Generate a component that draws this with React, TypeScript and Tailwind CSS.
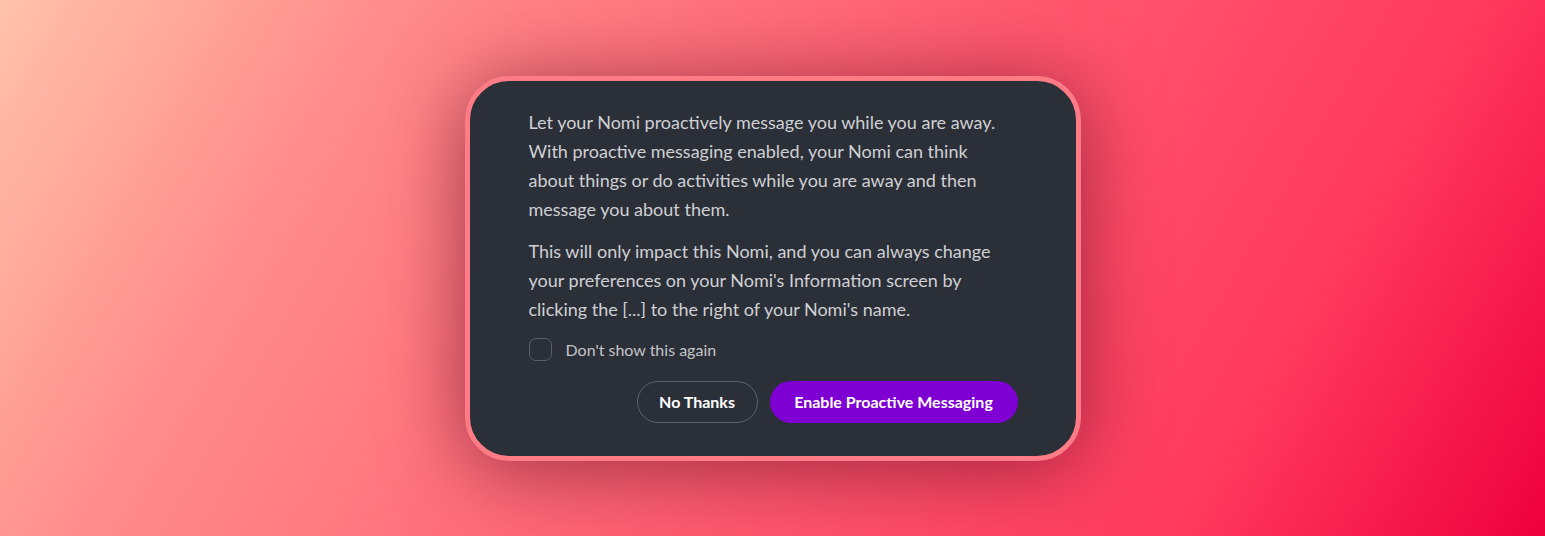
import { useState } from "react";

export default function App() {
  const [dontShow, setDontShow] = useState(false);

  return (
    <div className="flex h-[536px] w-full items-center justify-center bg-[linear-gradient(120deg,#ffc2aa_0%,#ff8e8c_20%,#ff5a70_55%,#ff3a5e_80%,#ee003e_100%)] font-['Lato',sans-serif]">
      {/* Dialog */}
      <div className="w-[616px] rounded-[44px] border-[5px] border-[#ff7b86] bg-[#2b2f38] pb-[33px] pl-[59px] pr-[58px] pt-[27px] shadow-[0_8px_80px_rgba(90,10,30,0.6)]">
        <div className="flex flex-col gap-[13px] text-[18px] leading-[29px] text-[#cfd0d4]">
          <p>
            Let your Nomi proactively message you while you are away. With
            proactive messaging enabled, your Nomi can think about things or do
            activities while you are away and then message you about them.
          </p>
          <p>
            This will only impact this Nomi, and you can always change your
            preferences on your Nomi's Information screen by clicking the [...]
            to the right of your Nomi's name.
          </p>
        </div>

        {/* Checkbox */}
        <label className="mt-[14px] flex cursor-pointer items-center gap-[14px]">
          <button
            onClick={() => setDontShow(!dontShow)}
            className="flex h-[23px] w-[23px] items-center justify-center rounded-[7px] border border-[#5b5f68]"
          >
            {dontShow && (
              <svg className="h-3.5 w-3.5 text-white" viewBox="0 0 24 24" fill="none" stroke="currentColor" strokeWidth={3}>
                <path strokeLinecap="round" strokeLinejoin="round" d="M5 13l4 4L19 7" />
              </svg>
            )}
          </button>
          <span className="text-[16px] text-[#c3c4c8]">Don't show this again</span>
        </label>

        {/* Buttons */}
        <div className="mt-[19px] flex justify-end gap-[12px]">
          <button className="h-[42px] w-[121px] rounded-full border border-[#5d6169] text-[16px] font-bold text-white">
            No Thanks
          </button>
          <button className="h-[42px] w-[248px] rounded-full bg-[#7e00d3] text-[16px] font-bold text-white">
            Enable Proactive Messaging
          </button>
        </div>
      </div>
    </div>
  );
}
